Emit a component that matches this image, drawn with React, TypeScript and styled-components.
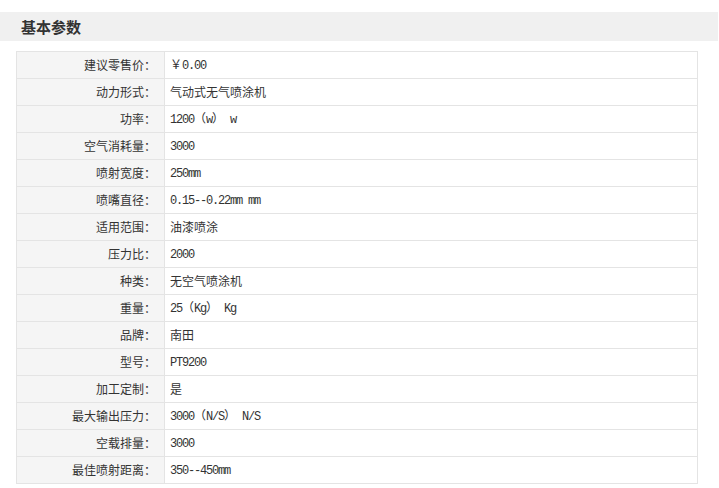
import React from "react";
import styled, { createGlobalStyle } from "styled-components";

const GlobalStyle = createGlobalStyle`
  html, body { margin: 0; padding: 0; background: #ffffff; }
  body { font-family: "Noto Sans CJK SC", "Liberation Sans", sans-serif; color: #333; }
`;

const Page = styled.div`
  width: 719px;
  padding-top: 12px;
`;

const Header = styled.div`
  width: 718px;
  height: 29px;
  background: #f0f0f0;
  display: flex;
  align-items: center;
  padding-left: 21px;
  box-sizing: border-box;
`;

const Title = styled.h3`
  margin: 0;
  font-size: 15px;
  font-weight: bold;
  color: #333;
  line-height: 1;
  font-family: "Noto Sans CJK SC", sans-serif;
`;

const Table = styled.table`
  margin: 10px 0 0 16px;
  width: 682px;
  border-collapse: collapse;
  table-layout: fixed;
  font-size: 12px;
`;

const Row = styled.tr`
  height: 27px;
`;

const Label = styled.td`
  width: 148px;
  height: 26px;
  box-sizing: border-box;
  background: #f5f5f5;
  border: 1px solid #e4e4e4;
  text-align: right;
  vertical-align: middle;
  padding: 0 8px 0 0;
  color: #333;
  line-height: 14px;
  white-space: nowrap;
  font-family: "Noto Sans CJK SC", sans-serif;
`;

const Value = styled.td`
  height: 26px;
  box-sizing: border-box;
  border: 1px solid #e4e4e4;
  vertical-align: middle;
  padding: 0 0 0 5px;
  color: #333;
  line-height: 14px;
  white-space: pre;
  font-family: "Noto Sans CJK SC", sans-serif;
`;

const Latin = styled.span`
  font-family: "Liberation Mono", monospace;
  font-size: 12px;
  line-height: 14px;
  letter-spacing: -1.2px;
`;

const rows: [string, string][] = [
  ["建议零售价", "￥0.00"],
  ["动力形式", "气动式无气喷涂机"],
  ["功率", "1200（w） w"],
  ["空气消耗量", "3000"],
  ["喷射宽度", "250mm"],
  ["喷嘴直径", "0.15--0.22mm mm"],
  ["适用范围", "油漆喷涂"],
  ["压力比", "2000"],
  ["种类", "无空气喷涂机"],
  ["重量", "25（Kg） Kg"],
  ["品牌", "南田"],
  ["型号", "PT9200"],
  ["加工定制", "是"],
  ["最大输出压力", "3000（N/S） N/S"],
  ["空载排量", "3000"],
  ["最佳喷射距离", "350--450mm"],
];

function renderValue(v: string) {
  const parts = v.split(/([\x20-\x7e]+)/).filter((p) => p.length > 0);
  return parts.map((p, i) =>
    /^[\x20-\x7e]+$/.test(p) ? <Latin key={i}>{p}</Latin> : <span key={i}>{p}</span>
  );
}

export default function App() {
  return (
    <Page>
      <GlobalStyle />
      <Header>
        <Title>基本参数</Title>
      </Header>
      <Table>
        <tbody>
          {rows.map(([k, v]) => (
            <Row key={k}>
              <Label>{k}：</Label>
              <Value>{renderValue(v)}</Value>
            </Row>
          ))}
        </tbody>
      </Table>
    </Page>
  );
}
